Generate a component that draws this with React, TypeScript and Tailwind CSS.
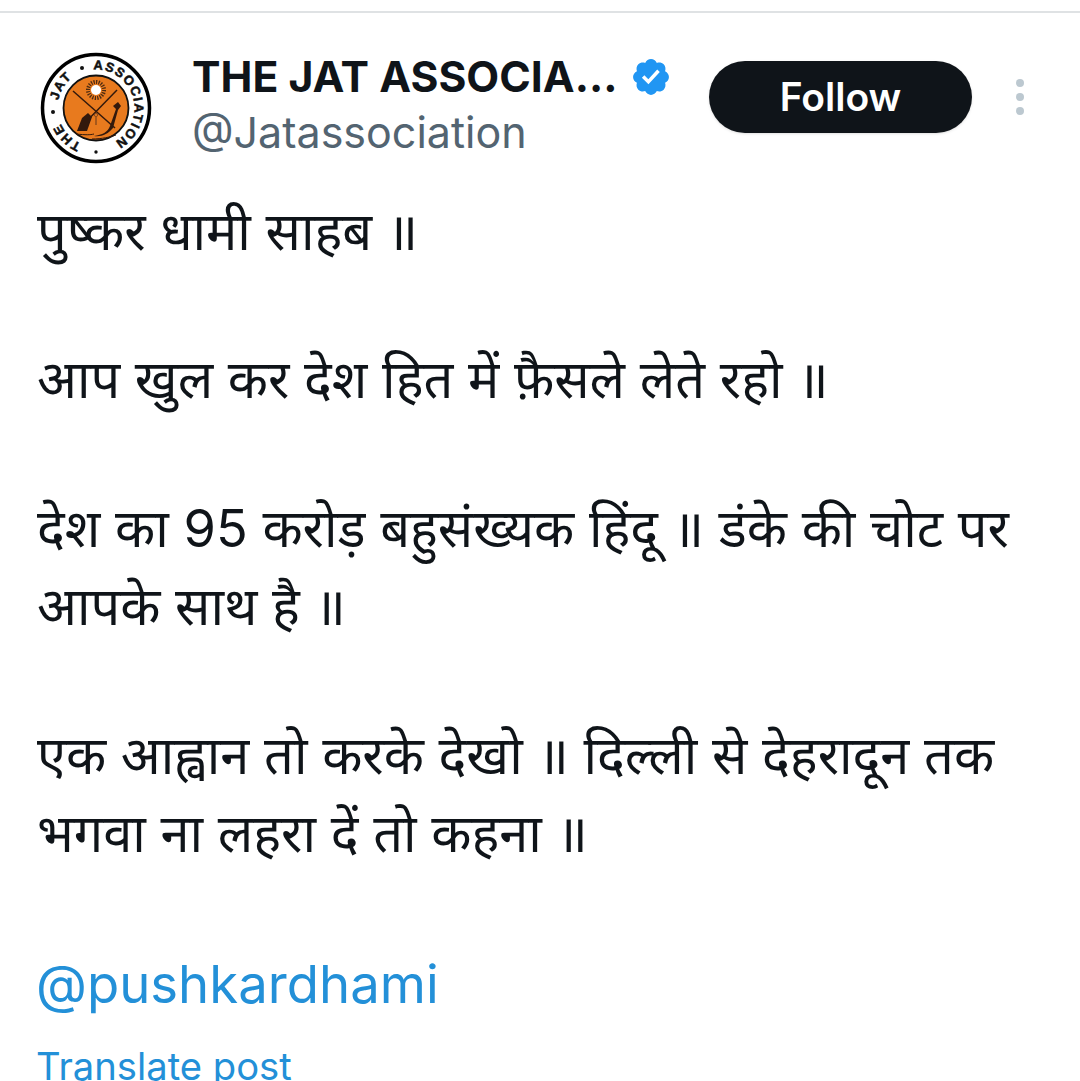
import React from 'react';

const lines = [
  'पुष्कर धामी साहब ॥',
  '',
  'आप खुल कर देश हित में फ़ैसले लेते रहो ॥',
  '',
  'देश का 95 करोड़ बहुसंख्यक हिंदू ॥ डंके की चोट पर',
  'आपके साथ है ॥',
  '',
  'एक आह्वान तो करके देखो ॥ दिल्ली से देहरादून तक',
  'भगवा ना लहरा दें तो कहना ॥',
];

const ringText = { fontFamily: '"Liberation Sans", sans-serif', stroke: '#111', strokeWidth: 0.5 };

const Logo = () => (
  <svg viewBox="0 0 112 112" className="w-[112px] h-[112px] shrink-0">
    <circle cx="56" cy="56" r="53.5" fill="#fff" stroke="#000" strokeWidth="3.5" />
    <circle cx="56" cy="56" r="32.5" fill="#e87a1e" stroke="#111" strokeWidth="1.8" />
    <defs>
      {/* starts at 6 o'clock, runs clockwise */}
      <path id="ring" d="M56 94.5 a38.5 38.5 0 1 1 0 -77 a38.5 38.5 0 1 1 0 77" />
    </defs>
    <g fontSize="13" fontWeight="700" fill="#111" textAnchor="middle" style={ringText}>
      <text letterSpacing="1.5"><textPath href="#ring" startOffset="12.5%">THE</textPath></text>
      <text letterSpacing="1.5"><textPath href="#ring" startOffset="33.9%">JAT</textPath></text>
      <text letterSpacing="1.4"><textPath href="#ring" startOffset="70.6%">ASSOCIATION</textPath></text>
    </g>
    <circle cx="42" cy="16" r="2" fill="#111" />
    <circle cx="13" cy="60" r="2" fill="#111" />
    <circle cx="56" cy="100" r="1.7" fill="#111" />
    <circle cx="56" cy="38" r="8" fill="none" stroke="#4a2a12" strokeWidth="4" strokeDasharray="1.2 1.3" />
    <circle cx="56" cy="38" r="5" fill="#fff" />
    <path d="M33 39 L75 76" stroke="#33190c" strokeWidth="1.5" />
    <path d="M77 38 L40 76" stroke="#33190c" strokeWidth="1.5" />
    <path d="M37 79 L42 66 L48 61 L52 65 L47 79 Z" fill="#33190c" />
    <path d="M54 84 C62 83 68 80 70 74 L76 57 L73 54 L78 50 L81 54 L78 58 L73 76 C68 82 62 85 54 84 Z" fill="#33190c" />
    <path d="M36 82 C46 83 50 83 54 82 M52 87 C62 87 70 85 76 83" stroke="#33190c" strokeWidth="1" fill="none" />
    <circle cx="56" cy="63" r="1.6" fill="none" stroke="#8a4a1a" strokeWidth="1" />
    <path d="M56 65 V73" stroke="#8a4a1a" strokeWidth="1.4" />
  </svg>
);

const Verified = () => (
  <svg viewBox="0 0 24 24" className="w-[42px] h-[42px] shrink-0 ml-[13px]">
    <path
      fill="#2196f3"
      d="M22.25 12c0-1.43-.88-2.67-2.19-3.34.46-1.39.2-2.9-.81-3.91s-2.52-1.27-3.91-.81c-.66-1.31-1.91-2.19-3.34-2.19s-2.67.88-3.33 2.19c-1.4-.46-2.91-.2-3.92.81s-1.26 2.52-.8 3.91c-1.31.67-2.2 1.91-2.2 3.34s.89 2.67 2.2 3.34c-.46 1.39-.21 2.9.8 3.91s2.52 1.26 3.91.81c.67 1.31 1.91 2.19 3.34 2.19s2.68-.88 3.34-2.19c1.39.45 2.9.2 3.91-.81s1.27-2.52.81-3.91c1.31-.67 2.19-1.91 2.19-3.34z"
    />
    <path fill="#fff" d="M10.54 16.2l-3.74-3.74 1.41-1.42 2.25 2.26 5.1-5.56 1.47 1.36z" />
  </svg>
);

export default function App() {
  return (
    <div className="w-[1080px] h-[1081px] overflow-hidden bg-white" style={{ fontFamily: 'Inter, "Noto Sans", sans-serif' }}>
      <div className="h-[13px] border-b-2 border-[#dfe2e4]" />
      <div className="flex items-center pl-[40px] pt-[39px]">
        <Logo />
        <div className="ml-[40px] w-[517px] self-start">
          <div className="flex items-center h-[50px]">
            <span className="text-[42.7px] leading-[50px] font-bold text-[#0f1419] whitespace-nowrap">THE JAT ASSOCIA...</span>
            <Verified />
          </div>
          <div className="mt-[5px] text-[43px] leading-[50px] text-[#536471]">@Jatassociation</div>
        </div>
        <button className="w-[263px] h-[72px] rounded-full bg-[#0f1419] text-white text-[39px] font-semibold mb-[22px] shadow-sm">
          Follow
        </button>
        <div className="ml-[44px] mb-[22px] flex flex-col gap-[6px]">
          <span className="w-2 h-2 rounded-full bg-[#bcc8d0]" />
          <span className="w-2 h-2 rounded-full bg-[#bcc8d0]" />
          <span className="w-2 h-2 rounded-full bg-[#bcc8d0]" />
        </div>
      </div>
      <div className="pl-[37px] pt-[27.5px] text-[52.3px] text-[#0f1419] whitespace-nowrap">
        {lines.map((line, i) => (
          <div key={i} className={line ? 'h-[78.5px] leading-[78.5px]' : 'h-[70px]'}>{line}</div>
        ))}
      </div>
      <div className="pl-[36px] pt-[74px] text-[52.7px] leading-[75px] text-[#2390d8]">@pushkardhami</div>
      <div className="pl-[36px] pt-[7px] text-[38.2px] leading-[75px] text-[#2390d8]">Translate post</div>
    </div>
  );
}
